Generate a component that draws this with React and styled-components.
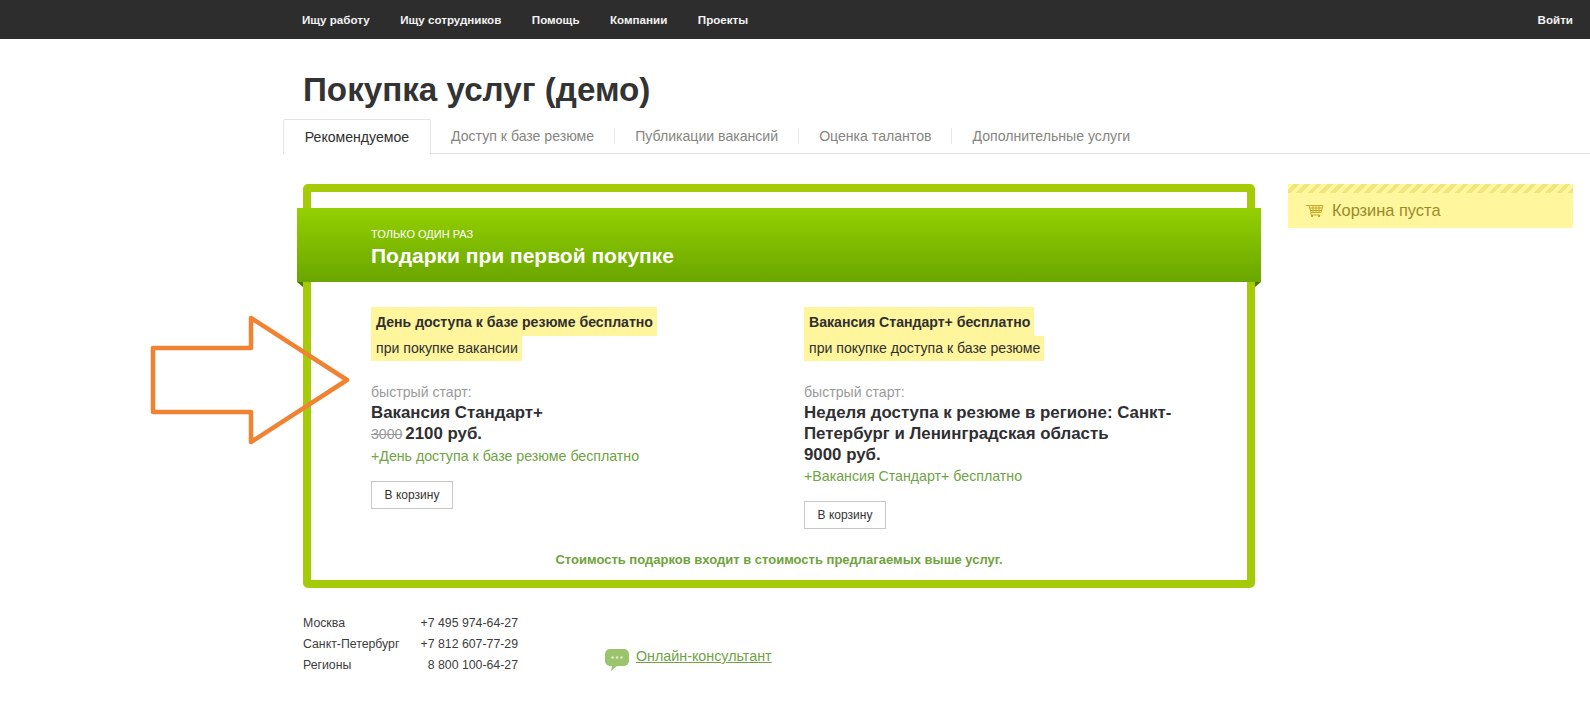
import React from "react";
import styled, { createGlobalStyle } from "styled-components";

const GlobalStyle = createGlobalStyle`
  html, body {
    margin: 0;
    padding: 0;
    background: #fff;
    font-family: "Liberation Sans", Arial, sans-serif;
    color: #2f2f2f;
  }
`;

const navLinks = ["Ищу работу", "Ищу сотрудников", "Помощь", "Компании", "Проекты"];
const tabs = ["Доступ к базе резюме", "Публикации вакансий", "Оценка талантов", "Дополнительные услуги"];
const phones = [
  ["Москва", "+7 495 974-64-27"],
  ["Санкт-Петербург", "+7 812 607-77-29"],
  ["Регионы", "8 800 100-64-27"],
];

const CartIcon = () => (
  <svg width="18" height="14" viewBox="0 0 18 14" fill="none" stroke="#c9a827" strokeWidth="1">
    <path d="M0 1.500h3.500M3 1.500h14l-2 7H5z" />
    <path d="M4 4h12M4.500 6.500h11M7 1.500v7M10 1.500v7M13 1.500v7" />
    <path d="M5 8.500v2.500h9" />
    <path d="M6 11v2M13 11v2" strokeWidth="2" />
  </svg>
);

const ChatIcon = () => (
  <svg width="24" height="22" viewBox="0 0 24 22">
    <path
      d="M5 0h14a5 5 0 0 1 5 5v7a5 5 0 0 1-5 5h-7l-6 5 1-5H5a5 5 0 0 1-5-5V5a5 5 0 0 1 5-5z"
      fill="#9cc46c"
    />
    <circle cx="7.500" cy="8.500" r="1.300" fill="#dcebc4" />
    <circle cx="12" cy="8.500" r="1.300" fill="#dcebc4" />
    <circle cx="16.500" cy="8.500" r="1.300" fill="#dcebc4" />
  </svg>
);

const Offer = ({ gift, condition, name, oldPrice, price, bonus }) => (
  <OfferColumn>
    <GiftBlock>
      <GiftLine $bold>{gift}</GiftLine>
      <GiftLine>{condition}</GiftLine>
    </GiftBlock>
    <StartLabel>быстрый старт:</StartLabel>
    <OfferName>{name}</OfferName>
    <OfferName>
      {oldPrice && <OldPrice>{oldPrice}</OldPrice>}
      {price}
    </OfferName>
    <Bonus>{bonus}</Bonus>
    <CartButton>В корзину</CartButton>
  </OfferColumn>
);

const App = () => {
  return (
    <>
      <GlobalStyle />
      <TopBar>
        <NavList>
          {navLinks.map((link) => (
            <NavLink key={link}>{link}</NavLink>
          ))}
        </NavList>
        <NavLink>Войти</NavLink>
      </TopBar>

      <PageTitle>Покупка услуг (демо)</PageTitle>

      <TabBar>
        <ActiveTab>Рекомендуемое</ActiveTab>
        {tabs.map((tab, i) => (
          <Tab key={tab} $first={i === 0}>
            {tab}
          </Tab>
        ))}
      </TabBar>

      <Content>
        <PromoCard>
          <PromoBand>
            <BandSmall>ТОЛЬКО ОДИН РАЗ</BandSmall>
            <BandTitle>Подарки при первой покупке</BandTitle>
          </PromoBand>
          <Offers>
            <Offer
              gift="День доступа к базе резюме бесплатно"
              condition="при покупке вакансии"
              name="Вакансия Стандарт+"
              oldPrice="3000"
              price="2100 руб."
              bonus="+День доступа к базе резюме бесплатно"
            />
            <Offer
              gift="Вакансия Стандарт+ бесплатно"
              condition="при покупке доступа к базе резюме"
              name="Неделя доступа к резюме в регионе: Санкт-Петербург и Ленинградская область"
              price="9000 руб."
              bonus="+Вакансия Стандарт+ бесплатно"
            />
          </Offers>
          <PromoNote>Стоимость подарков входит в стоимость предлагаемых выше услуг.</PromoNote>
        </PromoCard>

        <CartBox>
          <CartStripes />
          <CartRow>
            <CartIcon />
            Корзина пуста
          </CartRow>
        </CartBox>
      </Content>

      <Footer>
        <PhoneTable>
          {phones.map(([city, phone]) => (
            <PhoneRow key={city}>
              <span>{city}</span>
              <span>{phone}</span>
            </PhoneRow>
          ))}
        </PhoneTable>
        <Consultant>
          <ChatIcon />
          <ConsultantLink>Онлайн-консультант</ConsultantLink>
        </Consultant>
      </Footer>

      <ArrowMark viewBox="0 0 204 136" width="204" height="136">
        <path
          d="M3 35H101V5L197 67L101 129V99H3z"
          fill="none"
          stroke="#f08232"
          strokeWidth="4.500"
          strokeLinejoin="round"
        />
      </ArrowMark>
    </>
  );
};

export default App;

const TopBar = styled.div`
  height: 39px;
  background: #2d2d2d;
  display: flex;
  justify-content: space-between;
  align-items: center;
  padding: 0 17px 0 302px;
`;

const NavList = styled.div`
  display: flex;
  gap: 30.5px;
`;

const NavLink = styled.a`
  font-size: 11.6px;
  font-weight: 700;
  color: #f2f2f2;
`;

const PageTitle = styled.h1`
  margin: 32px 0 0 303px;
  font-size: 33.2px;
  line-height: 38px;
  font-weight: 700;
  color: #333;
`;

const TabBar = styled.div`
  display: flex;
  align-items: center;
  height: 34px;
  margin: 10px 0 0 283px;
  border-bottom: 1px solid #e4e4e4;
`;

const ActiveTab = styled.div`
  box-sizing: border-box;
  width: 148px;
  height: 35px;
  padding-top: 9px;
  text-align: center;
  font-size: 14.1px;
  color: #2f2f2f;
  background: #fff;
  border: 1px solid #e4e4e4;
  border-bottom: none;
  border-radius: 2px 2px 0 0;
  align-self: flex-start;
`;

const Tab = styled.div`
  font-size: 14.1px;
  line-height: 16px;
  color: #85857f;
  padding: 0 20px;
  border-left: ${(p) => (p.$first ? "none" : "1px solid #e8e8e8")};
`;

const Content = styled.div`
  display: flex;
  align-items: flex-start;
  gap: 33px;
  margin: 30px 17px 0 303px;
`;

const PromoCard = styled.div`
  box-sizing: border-box;
  width: 952px;
  height: 404px;
  border: 8px solid #a5cb08;
  border-radius: 5px;
  padding-top: 16px;
`;

const PromoBand = styled.div`
  position: relative;
  box-sizing: border-box;
  height: 74px;
  margin: 0 -14px;
  padding: 20px 0 0 74px;
  background: linear-gradient(#94d000, #6aa600);
  color: #fff;

  &::before,
  &::after {
    content: "";
    position: absolute;
    top: 100%;
    width: 6px;
    height: 5px;
    background: #4c7400;
  }

  &::before {
    left: 0;
    clip-path: polygon(0 0, 100% 0, 100% 100%);
  }

  &::after {
    right: 0;
    clip-path: polygon(0 0, 100% 0, 0 100%);
  }
`;

const BandSmall = styled.div`
  font-size: 11px;
  line-height: 13px;
`;

const BandTitle = styled.div`
  margin-top: 3px;
  font-size: 21px;
  line-height: 24px;
  font-weight: 700;
`;

const Offers = styled.div`
  display: grid;
  grid-template-columns: 433px 380px;
  padding: 25px 0 0 60px;
`;

const OfferColumn = styled.div`
  display: flex;
  flex-direction: column;
  align-items: flex-start;
`;

const GiftBlock = styled.div`
  display: flex;
  flex-direction: column;
  align-items: flex-start;
  margin-bottom: 21px;
`;

const GiftLine = styled.div`
  background: #fff59d;
  padding: 0 4px 0 5px;
  font-size: 14.1px;
  height: ${(p) => (p.$bold ? "29px" : "25px")};
  line-height: ${(p) => (p.$bold ? "31px" : "25px")};
  font-weight: ${(p) => (p.$bold ? 700 : 400)};
`;

const StartLabel = styled.div`
  font-size: 14.1px;
  line-height: 20px;
  color: #9a9a9a;
`;

const OfferName = styled.div`
  font-size: 16.85px;
  line-height: 21px;
  font-weight: 700;
  color: #2f2f33;
`;

const OldPrice = styled.s`
  font-size: 14.1px;
  font-weight: 400;
  color: #999;
  margin-right: 3px;
`;

const Bonus = styled.div`
  margin-top: 1px;
  font-size: 14.2px;
  line-height: 20px;
  color: #6fa344;
`;

const CartButton = styled.button`
  box-sizing: border-box;
  width: 82px;
  height: 28px;
  margin-top: 15px;
  padding: 0;
  background: #fff;
  border: 1px solid #c8c8c8;
  font-family: inherit;
  font-size: 12px;
  color: #333;
`;

const PromoNote = styled.div`
  margin-top: 23px;
  text-align: center;
  font-size: 13px;
  font-weight: 700;
  color: #6fa33c;
`;

const CartBox = styled.div`
  flex: 1;
  height: 44px;
  background: #fff69e;
`;

const CartStripes = styled.div`
  height: 9px;
  background: repeating-linear-gradient(
    -45deg,
    #efe67e 0 4px,
    #fff69e 4px 8px
  );
`;

const CartRow = styled.div`
  display: flex;
  align-items: center;
  gap: 8px;
  padding: 8px 0 0 18px;
  font-size: 16.4px;
  line-height: 19px;
  color: #9c8a2a;
`;

const Footer = styled.div`
  display: flex;
  align-items: flex-end;
  gap: 87px;
  margin: 25px 0 0 303px;
`;

const PhoneTable = styled.div`
  width: 215px;
`;

const PhoneRow = styled.div`
  display: flex;
  justify-content: space-between;
  font-size: 12.3px;
  line-height: 21px;
  color: #3c3c3c;
`;

const Consultant = styled.div`
  display: flex;
  align-items: center;
  gap: 7px;
  margin-bottom: 4px;
`;

const ConsultantLink = styled.a`
  margin-bottom: 8px;
  font-size: 14.3px;
  line-height: 16px;
  color: #6fa344;
  text-decoration: underline;
`;

/* hand-drawn annotation lying over the page */
const ArrowMark = styled.svg`
  position: absolute;
  left: 150px;
  top: 313px;
`;
